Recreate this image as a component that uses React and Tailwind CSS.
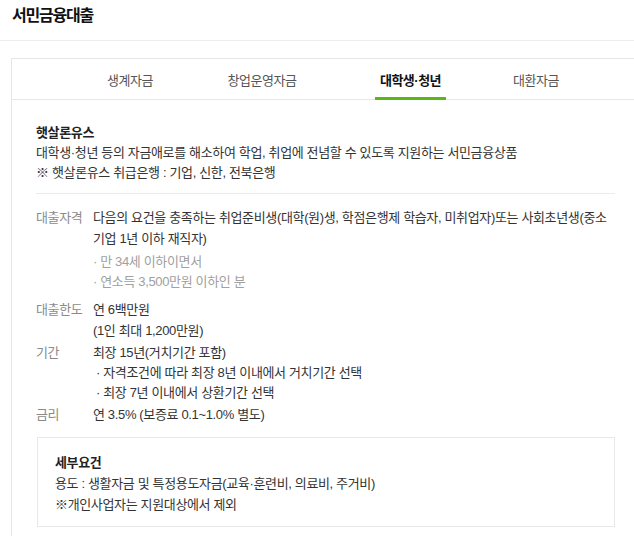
const tabs = [
  { label: "생계자금", cls: "ml-[88px] w-[60px]" },
  { label: "창업운영자금", cls: "ml-[57px] w-[90px]" },
  { label: "대학생·청년", cls: "ml-[68px] w-[71px]", active: true },
  { label: "대환자금", cls: "ml-[60px] w-[60px]" },
];

const Row = ({ label, className = "", children }) => (
  <div className={`flex leading-[21px] ${className}`}>
    <div className="w-[57px] shrink-0 text-[#8a8a8a]">{label}</div>
    <div className="flex-1 text-[#333]">{children}</div>
  </div>
);

export default function App() {
  return (
    <div className="w-[634px] h-[536px] overflow-hidden bg-white font-['Liberation_Sans','Noto_Sans_CJK_KR',sans-serif] text-[13px] tracking-[-0.35px] text-[#333]">
      <div className="h-[41px] border-b border-[#ededed] px-3 pt-[6px]">
        <h1 className="text-[16px] leading-[20px] font-bold tracking-[-1.2px] text-[#111]">서민금융대출</h1>
      </div>

      <div className="ml-[11px] mt-[17px] w-[630px] border border-[#e6e6e6]">
        {/* tabs */}
        <div className="flex border-b border-[#e8e8e8]">
          {tabs.map((t) => (
            <div
              key={t.label}
              className={`${t.cls} -mb-px h-[41px] pt-[12px] text-center leading-[20px] tracking-[-0.5px] ${
                t.active
                  ? "border-b-[3px] border-[#5ab812] font-bold text-[#111]"
                  : "text-[#555]"
              }`}
            >
              {t.label}
            </div>
          ))}
        </div>

        <div className="pl-[24px] pr-[25px] pt-[23px]">
          <div className="leading-[20px]">
            <h2 className="font-bold text-[#222]">햇살론유스</h2>
            <p>대학생·청년 등의 자금애로를 해소하여 학업, 취업에 전념할 수 있도록 지원하는 서민금융상품</p>
            <p>※ 햇살론유스 취급은행 : 기업, 신한, 전북은행</p>
          </div>
          <div className="mt-[10px] border-t border-[#ebebeb]" />

          <div className="mt-[13px]">
            <Row label="대출자격">
              <p>
                다음의 요건을 충족하는 취업준비생(대학(원)생, 학점은행제 학습자, 미취업자)또는 사회초년생(중소
                <br />
                기업 1년 이하 재직자)
              </p>
              <ul className="mt-[3px] mb-[7px] leading-[20px] text-[#a0a0a0]">
                <li>· 만 34세 이하이면서</li>
                <li>· 연소득 3,500만원 이하인 분</li>
              </ul>
            </Row>
            <Row label="대출한도">
              <p>연 6백만원</p>
              <p>(1인 최대 1,200만원)</p>
            </Row>
            <Row label="기간" className="mt-[1px]">
              <p>최장 15년(거치기간 포함)</p>
              <ul className="pl-[3px] leading-[20px]">
                <li>· 자격조건에 따라 최장 8년 이내에서 거치기간 선택</li>
                <li>· 최장 7년 이내에서 상환기간 선택</li>
              </ul>
            </Row>
            <Row label="금리" className="mt-[1px]">
              <p>연 3.5% (보증료 0.1~1.0% 별도)</p>
            </Row>
          </div>

          <div className="ml-px mt-[12px] w-[578px] border border-[#e8e8e8] pl-[17px] pt-[15px] pb-[11px]">
            <h3 className="font-bold leading-[20px] text-[#222]">세부요건</h3>
            <p className="leading-[21px]">용도 : 생활자금 및 특정용도자금(교육·훈련비, 의료비, 주거비)</p>
            <p className="leading-[21px]">※개인사업자는 지원대상에서 제외</p>
          </div>
          <div className="h-[40px]" />
        </div>
      </div>
    </div>
  );
}
